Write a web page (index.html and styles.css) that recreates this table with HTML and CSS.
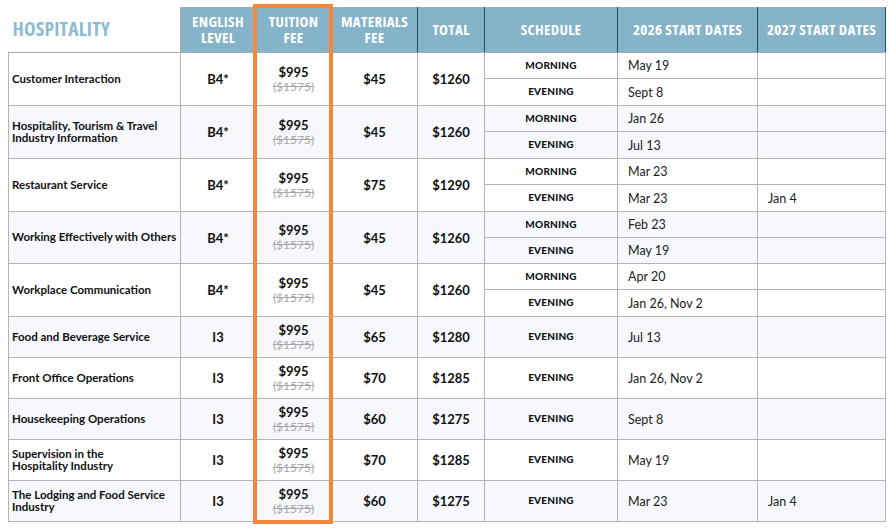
FILE: index.html
```html
<!DOCTYPE html>
<html>
<head>
<meta charset="utf-8">
<link rel="stylesheet" href="styles.css">
</head>
<body>
<div class="page">
  <div class="wrap">
    <table class="grid">
      <colgroup>
        <col class="c-name"><col class="c-eng"><col class="c-fee"><col class="c-mat"><col class="c-tot"><col class="c-sch"><col class="c-d26"><col class="c-d27">
      </colgroup>
      <thead>
        <tr class="head">
          <th class="title">HOSPITALITY</th>
          <th>ENGLISH<br>LEVEL</th>
          <th>TUITION<br>FEE</th>
          <th>MATERIALS<br>FEE</th>
          <th>TOTAL</th>
          <th>SCHEDULE</th>
          <th>2026 START DATES</th>
          <th>2027 START DATES</th>
        </tr>
      </thead>
      <tbody>
        <tr class="sub a odd">
          <td rowspan="2" class="name">Customer Interaction</td>
          <td rowspan="2" class="ctr b">B4*</td>
          <td rowspan="2" class="fee"><span class="now">$995</span><span class="was">($1575)</span></td>
          <td rowspan="2" class="ctr b">$45</td>
          <td rowspan="2" class="ctr b">$1260</td>
          <td class="sch">MORNING</td><td class="date">May 19</td><td class="date"></td>
        </tr>
        <tr class="sub b2 odd"><td class="sch">EVENING</td><td class="date">Sept 8</td><td class="date"></td></tr>

        <tr class="sub a even">
          <td rowspan="2" class="name">Hospitality, Tourism &amp; Travel Industry Information</td>
          <td rowspan="2" class="ctr b">B4*</td>
          <td rowspan="2" class="fee"><span class="now">$995</span><span class="was">($1575)</span></td>
          <td rowspan="2" class="ctr b">$45</td>
          <td rowspan="2" class="ctr b">$1260</td>
          <td class="sch">MORNING</td><td class="date">Jan 26</td><td class="date"></td>
        </tr>
        <tr class="sub b2 even"><td class="sch">EVENING</td><td class="date">Jul 13</td><td class="date"></td></tr>

        <tr class="sub a odd">
          <td rowspan="2" class="name">Restaurant Service</td>
          <td rowspan="2" class="ctr b">B4*</td>
          <td rowspan="2" class="fee"><span class="now">$995</span><span class="was">($1575)</span></td>
          <td rowspan="2" class="ctr b">$75</td>
          <td rowspan="2" class="ctr b">$1290</td>
          <td class="sch">MORNING</td><td class="date">Mar 23</td><td class="date"></td>
        </tr>
        <tr class="sub b2 odd"><td class="sch">EVENING</td><td class="date">Mar 23</td><td class="date">Jan 4</td></tr>

        <tr class="sub a even">
          <td rowspan="2" class="name">Working Effectively with Others</td>
          <td rowspan="2" class="ctr b">B4*</td>
          <td rowspan="2" class="fee"><span class="now">$995</span><span class="was">($1575)</span></td>
          <td rowspan="2" class="ctr b">$45</td>
          <td rowspan="2" class="ctr b">$1260</td>
          <td class="sch">MORNING</td><td class="date">Feb 23</td><td class="date"></td>
        </tr>
        <tr class="sub b3 even"><td class="sch">EVENING</td><td class="date">May 19</td><td class="date"></td></tr>

        <tr class="sub a odd">
          <td rowspan="2" class="name">Workplace Communication</td>
          <td rowspan="2" class="ctr b">B4*</td>
          <td rowspan="2" class="fee"><span class="now">$995</span><span class="was">($1575)</span></td>
          <td rowspan="2" class="ctr b">$45</td>
          <td rowspan="2" class="ctr b">$1260</td>
          <td class="sch">MORNING</td><td class="date">Apr 20</td><td class="date"></td>
        </tr>
        <tr class="sub b2 odd"><td class="sch">EVENING</td><td class="date">Jan 26, Nov 2</td><td class="date"></td></tr>

        <tr class="single even">
          <td class="name">Food and Beverage Service</td>
          <td class="ctr b">I3</td>
          <td class="fee"><span class="now">$995</span><span class="was">($1575)</span></td>
          <td class="ctr b">$65</td>
          <td class="ctr b">$1280</td>
          <td class="sch">EVENING</td><td class="date">Jul 13</td><td class="date"></td>
        </tr>
        <tr class="single odd">
          <td class="name">Front Office Operations</td>
          <td class="ctr b">I3</td>
          <td class="fee"><span class="now">$995</span><span class="was">($1575)</span></td>
          <td class="ctr b">$70</td>
          <td class="ctr b">$1285</td>
          <td class="sch">EVENING</td><td class="date">Jan 26, Nov 2</td><td class="date"></td>
        </tr>
        <tr class="single even">
          <td class="name">Housekeeping Operations</td>
          <td class="ctr b">I3</td>
          <td class="fee"><span class="now">$995</span><span class="was">($1575)</span></td>
          <td class="ctr b">$60</td>
          <td class="ctr b">$1275</td>
          <td class="sch">EVENING</td><td class="date">Sept 8</td><td class="date"></td>
        </tr>
        <tr class="single odd">
          <td class="name">Supervision in the<br>Hospitality Industry</td>
          <td class="ctr b">I3</td>
          <td class="fee"><span class="now">$995</span><span class="was">($1575)</span></td>
          <td class="ctr b">$70</td>
          <td class="ctr b">$1285</td>
          <td class="sch">EVENING</td><td class="date">May 19</td><td class="date"></td>
        </tr>
        <tr class="single even">
          <td class="name">The Lodging and Food Service<br>Industry</td>
          <td class="ctr b">I3</td>
          <td class="fee"><span class="now">$995</span><span class="was">($1575)</span></td>
          <td class="ctr b">$60</td>
          <td class="ctr b">$1275</td>
          <td class="sch">EVENING</td><td class="date">Mar 23</td><td class="date">Jan 4</td>
        </tr>
      </tbody>
    </table>
    <div class="highlight"></div>
  </div>
</div>
</body>
</html>
```
FILE: styles.css
```css
* { box-sizing: border-box; }
html, body { margin: 0; padding: 0; background: #fff; }
.page {
  width: 892px;
  height: 530px;
  padding: 7px 0 0 8px;
  font-family: "Lato", "Noto Sans", sans-serif;
  color: #111;
}
.wrap { position: relative; width: 877px; }
.grid {
  width: 877px;
  table-layout: fixed;
  border-collapse: collapse;
}
.c-name { width: 172px; }
.c-eng { width: 75px; }
.c-fee { width: 76px; }
.c-mat { width: 86px; }
.c-tot { width: 67px; }
.c-sch { width: 133px; }
.c-d26 { width: 140px; }
.c-d27 { width: 128px; }

.head { height: 45px; }
.head th {
  background: #84b3ca;
  color: #fff;
  font-family: "Open Sans", sans-serif;
  font-stretch: condensed;
  font-weight: bold;
  font-size: 15px;
  line-height: 16px;
  letter-spacing: 0.3px;
  text-align: center;
  vertical-align: middle;
  padding: 0 2px 3px;
  border-top: 1px solid #a9a9a9;
  border-left: 1px solid #1f4d68;
  border-right: 1px solid #1f4d68;
  border-bottom: 1px solid #a9a9a9;
}
.head th.title {
  background: #fff;
  color: #8dbbd2;
  font-size: 19.5px;
  line-height: 22px;
  letter-spacing: 0.2px;
  text-align: left;
  padding: 0 0 2px 4px;
  border-top: none;
  border-left: none;
  border-right: 1px solid #a9a9a9;
}
tbody td {
  border: 1px solid #b4b4b4;
  padding: 0;
  vertical-align: middle;
}
.a { height: 26px; }
.b2 { height: 27px; }
.b3 { height: 26px; }
.single { height: 41px; }
.even td { background: #f6f8fc; }
.odd td { background: #fff; }

.name {
  font-weight: bold;
  font-size: 11.5px;
  line-height: 12.5px;
  padding-left: 3px !important;
}
.ctr { text-align: center; }
.b { font-weight: bold; font-size: 13px; }
.fee { text-align: center; }
.now { display: block; font-weight: bold; font-size: 13px; line-height: 15px; }
.was {
  display: block;
  color: #a8a8a8;
  font-size: 12px;
  line-height: 14px;
  text-decoration: line-through;
}
.sch {
  text-align: center;
  font-weight: 900;
  font-size: 10px;
  letter-spacing: 0.2px;
  padding-bottom: 2px !important;
}
.date {
  font-size: 12.5px;
  padding-left: 10px !important;
  color: #222;
}
.highlight {
  position: absolute;
  left: 245px;
  top: -3px;
  width: 80px;
  height: 520px;
  border: 4px solid #f5863a;
  pointer-events: none;
}
```
